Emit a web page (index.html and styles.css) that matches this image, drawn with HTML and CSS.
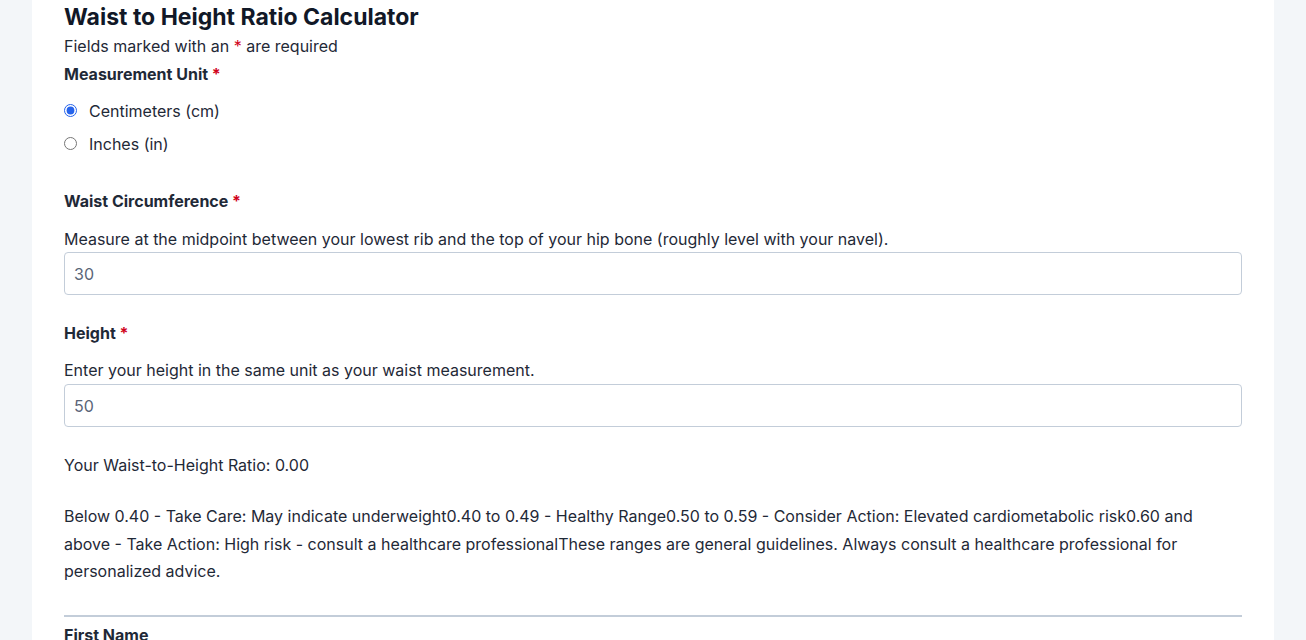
FILE: index.html
```html
<!DOCTYPE html>
<html lang="en">
<head>
<meta charset="utf-8">
<title>Waist to Height Ratio Calculator</title>
<link rel="stylesheet" href="styles.css">
</head>
<body>
<main class="card">
  <h2 class="title">Waist to Height Ratio Calculator</h2>
  <p class="required-note">Fields marked with an <span class="req">*</span> are required</p>

  <div class="group">
    <div class="label">Measurement Unit <span class="req">*</span></div>
    <div class="radios">
      <label class="radio"><input type="radio" name="unit" checked><span>Centimeters (cm)</span></label>
      <label class="radio"><input type="radio" name="unit"><span>Inches (in)</span></label>
    </div>
  </div>

  <div class="field field-waist">
    <label class="label" for="waist">Waist Circumference <span class="req">*</span></label>
    <p class="desc">Measure at the midpoint between your lowest rib and the top of your hip bone (roughly level with your navel).</p>
    <input class="text-input" id="waist" type="text" value="30">
  </div>

  <div class="field field-height">
    <label class="label" for="height">Height <span class="req">*</span></label>
    <p class="desc">Enter your height in the same unit as your waist measurement.</p>
    <input class="text-input" id="height" type="text" value="50">
  </div>

  <p class="result">Your Waist-to-Height Ratio: 0.00</p>

  <p class="ranges">Below 0.40 - Take Care: May indicate underweight0.40 to 0.49 - Healthy Range0.50 to 0.59 - Consider Action: Elevated cardiometabolic risk0.60 and above - Take Action: High risk - consult a healthcare professionalThese ranges are general guidelines. Always consult a healthcare professional for personalized advice.</p>

  <hr class="divider">

  <div class="label">First Name</div>
</main>
</body>
</html>
```

FILE: styles.css
```css
html, body {
  margin: 0;
  padding: 0;
}
body {
  background: #f3f6f9;
  font-family: Inter, "Noto Sans", sans-serif;
  font-size: 16px;
  color: #1f2937;
  height: 640px;
  overflow: hidden;
}
.card {
  background: #ffffff;
  margin: 0 32px;
  padding: 0 32px 40px;
  min-height: 700px;
}
.title {
  margin: 0;
  font-size: 23px;
  line-height: 34px;
  font-weight: 700;
  color: #111827;
}
.required-note {
  margin: 0;
  line-height: 24px;
}
.req {
  color: #d0021b;
}
.label {
  display: block;
  font-weight: 700;
  line-height: 24px;
  color: #1f2937;
}
.group {
  margin-top: 4px;
}
.radios {
  margin-top: 8px;
  display: flex;
  flex-direction: column;
}
.radio {
  display: flex;
  align-items: center;
  height: 33px;
}
.radio input {
  margin: 0 12px 0 0;
  width: 13px;
  height: 13px;
  accent-color: #2563eb;
}
.field-waist {
  margin-top: 29px;
}
.field-height {
  margin-top: 26px;
}
.desc {
  margin: 14px 0 1px;
  line-height: 24px;
}
.field-height .desc {
  margin: 13px 0 2px;
}
.text-input {
  display: block;
  box-sizing: border-box;
  width: 100%;
  height: 43px;
  padding: 0 9px;
  border: 1px solid #c3cdd9;
  border-radius: 4px;
  font-family: inherit;
  font-size: 16px;
  color: #5a6578;
  background: #fff;
  outline: none;
}
.result {
  margin: 26px 0 0;
  line-height: 24px;
}
.ranges {
  margin: 26px 0 0;
  line-height: 27.5px;
}
.divider {
  margin: 29px 0 6px;
  border: 0;
  height: 2px;
  background: #c3cdd9;
}
```
